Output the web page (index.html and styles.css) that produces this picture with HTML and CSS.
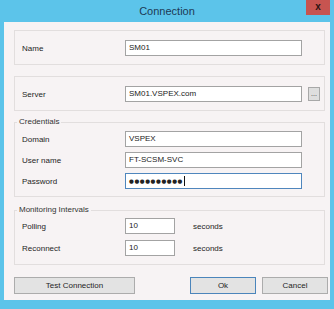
FILE: index.html
```html
<!DOCTYPE html>
<html lang="en">
<head>
    <meta charset="UTF-8">
    <title>Connection</title>
    <link rel="stylesheet" href="styles.css">
</head>
<body>
    <div class="window">
        <!-- Title bar -->
        <div class="titlebar">
            <span></span>
            <div class="title">Connection</div>
            <div class="close">x</div>
        </div>

        <!-- Client area -->
        <div class="client">
            <div class="panel">
                <div class="row">
                    <span class="label">Name</span>
                    <div class="textbox">SM01</div>
                </div>
            </div>

            <div class="panel server-panel">
                <div class="row">
                    <span class="label">Server</span>
                    <div class="textbox">SM01.VSPEX.com</div>
                    <div class="browse">...</div>
                </div>
            </div>

            <fieldset class="group credentials">
                <legend>Credentials</legend>
                <div class="row">
                    <span class="label">Domain</span>
                    <div class="textbox">VSPEX</div>
                </div>
                <div class="row">
                    <span class="label">User name</span>
                    <div class="textbox">FT-SCSM-SVC</div>
                </div>
                <div class="row">
                    <span class="label">Password</span>
                    <div class="textbox focused"><span class="dots">&#9679;&#9679;&#9679;&#9679;&#9679;&#9679;&#9679;&#9679;&#9679;&#9679;</span><span class="caret"></span></div>
                </div>
            </fieldset>

            <fieldset class="group monitoring">
                <legend>Monitoring Intervals</legend>
                <div class="row">
                    <span class="label">Polling</span>
                    <div class="textbox small">10</div>
                    <span class="unit">seconds</span>
                </div>
                <div class="row">
                    <span class="label">Reconnect</span>
                    <div class="textbox small">10</div>
                    <span class="unit">seconds</span>
                </div>
            </fieldset>

            <div class="buttons">
                <button class="btn test">Test Connection</button>
                <div class="dialog-buttons">
                    <button class="btn default">Ok</button>
                    <button class="btn">Cancel</button>
                </div>
            </div>
        </div>
    </div>
</body>
</html>
```

FILE: styles.css
```css
body {
    margin: 0;
    background-color: #5cc4ea;
    font-family: 'Liberation Sans', Arial, sans-serif;
    font-size: 8px;
    color: #1e1e1e;
}

.window {
    width: 334px;
    height: 309px;
    display: flex;
    flex-direction: column;
}

.titlebar {
    height: 22px;
    display: grid;
    grid-template-columns: 1fr auto 1fr;
}

.title {
    font-size: 11px;
    line-height: 22px;
    color: #1d3a55;
}

.close {
    justify-self: end;
    width: 24px;
    height: 15px;
    margin-right: 4px;
    background-color: #c75450;
    color: #2b1412;
    font-size: 10px;
    font-weight: bold;
    line-height: 13px;
    text-align: center;
}

.client {
    flex: 1;
    margin: 0 4px 9px 4px;
    padding: 8px 5px 6px 10px;
    background-color: #f7f3f4;
    display: flex;
    flex-direction: column;
}

.panel {
    height: 35px;
    box-sizing: border-box;
    border: 1px solid #e2dede;
    padding: 9px 0 0 7px;
}

.server-panel {
    margin-top: 11px;
}

.row {
    display: flex;
    align-items: center;
}

.label {
    width: 103px;
}

.textbox {
    width: 177px;
    height: 16px;
    box-sizing: border-box;
    border: 1px solid #a3a3a3;
    background-color: #fff;
    padding: 0 3px;
    line-height: 14px;
    color: #222;
    display: flex;
    align-items: center;
}

.textbox.small {
    width: 50px;
}

.textbox.focused {
    border-color: #4f86bd;
}

.dots {
    font-family: 'DejaVu Sans', sans-serif;
    font-size: 5.5px;
    letter-spacing: 0.6px;
}

.caret {
    width: 1px;
    height: 10px;
    margin-left: 1px;
    background-color: #111;
}

.browse {
    width: 12px;
    height: 14px;
    box-sizing: border-box;
    margin-left: 6px;
    border: 1px solid #a8a8a8;
    background-color: #dedede;
    font-size: 7px;
    line-height: 12px;
    text-align: center;
    color: #333;
}

.unit {
    margin-left: 18px;
}

.group {
    margin: 0;
    border: 1px solid #e2dede;
    padding: 4px 0 7px 7px;
    min-width: 0;
}

.group legend {
    padding: 0 2px;
    margin-left: -5px;
    line-height: 10px;
    color: #333;
}

.credentials {
    margin-top: 6px;
    display: flex;
    flex-direction: column;
    gap: 5px;
}

.monitoring {
    margin-top: 8px;
    padding-top: 3px;
    padding-bottom: 8px;
    display: flex;
    flex-direction: column;
    gap: 6px;
}

.buttons {
    margin-top: 12px;
    margin-right: -3px;
    display: flex;
    justify-content: space-between;
}

.dialog-buttons {
    display: flex;
    gap: 6px;
}

.btn {
    height: 17px;
    width: 66px;
    box-sizing: border-box;
    border: 1px solid #acacac;
    background-color: #e3e3e3;
    font-family: inherit;
    font-size: 8px;
    color: #1e1e1e;
    padding: 0;
}

.btn.test {
    width: 121px;
}

.btn.default {
    border-color: #4b85bb;
}
```
